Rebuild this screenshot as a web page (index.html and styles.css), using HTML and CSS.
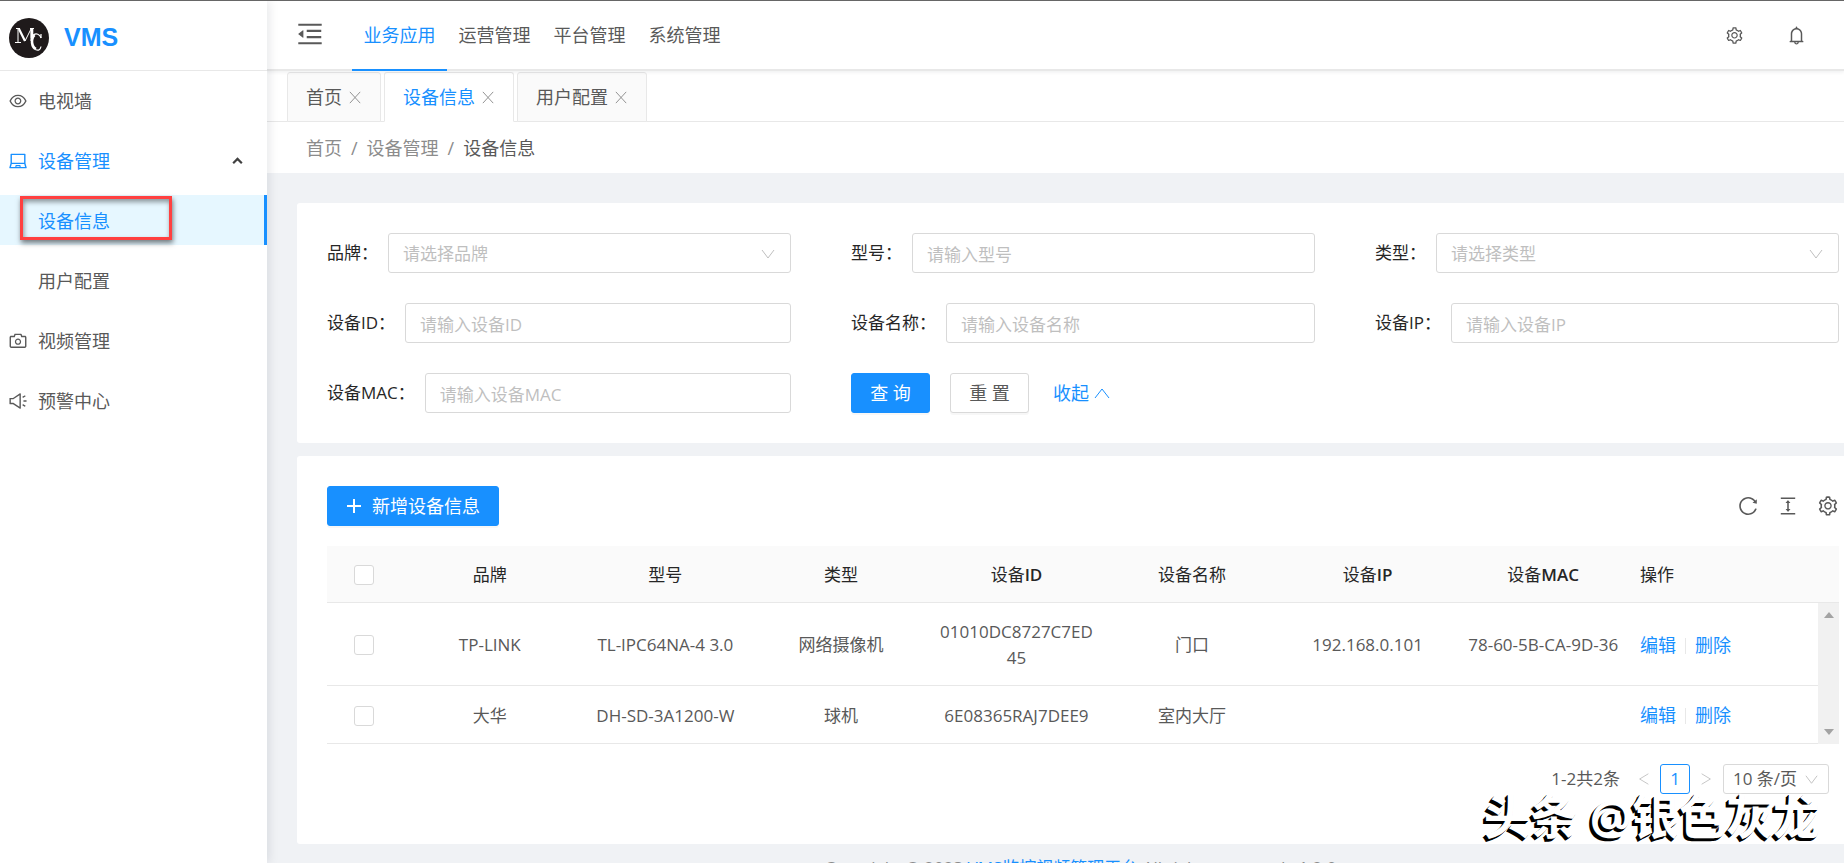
FILE: index.html
```html
<!DOCTYPE html>
<html lang="zh-CN">
<head>
<meta charset="utf-8">
<title>VMS</title>
<link rel="stylesheet" href="styles.css">
</head>
<body>
<svg class="sprite" aria-hidden="true">
  <symbol id="i-eye" viewBox="0 0 1024 1024"><path d="M942.2 486.2C847.4 286.5 704.1 186 512 186c-192.2 0-335.4 100.5-430.2 300.3a60.3 60.3 0 000 51.5C176.6 737.5 319.9 838 512 838c192.2 0 335.4-100.5 430.2-300.3 7.7-16.2 7.7-35 0-51.5zM512 766c-161.3 0-279.4-81.8-362.7-254C232.6 339.8 350.7 258 512 258c161.3 0 279.4 81.8 362.7 254C791.5 684.2 673.4 766 512 766zm-4-430c-97.2 0-176 78.8-176 176s78.8 176 176 176 176-78.8 176-176-78.8-176-176-176zm0 288c-61.9 0-112-50.1-112-112s50.1-112 112-112 112 50.1 112 112-50.1 112-112 112z"/></symbol>
  <symbol id="i-laptop" viewBox="0 0 1024 1024"><path d="M956.9 845.1L896.4 632V168c0-17.7-14.3-32-32-32h-704c-17.7 0-32 14.3-32 32v464L67.9 845.1C60.4 866 75.8 888 98 888h828.8c22.2 0 37.6-22 30.1-42.9zM200.4 208h624v395h-624V208zm228.3 608l8.1-37h150.3l8.1 37H428.7zm224 0l-19.1-86.7c-.8-3.7-4.1-6.3-7.8-6.3H398.2c-3.8 0-7 2.6-7.8 6.3L371.3 816H151l42.3-149h638.2l42.3 149H652.7z"/></symbol>
  <symbol id="i-camera" viewBox="0 0 1024 1024"><path d="M864 248H728l-32.4-90.8a32.07 32.07 0 00-30.2-21.2H358.6c-13.5 0-25.6 8.5-30.1 21.2L296 248H160c-44.2 0-80 35.8-80 80v456c0 44.2 35.8 80 80 80h704c44.2 0 80-35.8 80-80V328c0-44.2-35.8-80-80-80zm8 536c0 4.4-3.6 8-8 8H160c-4.4 0-8-3.6-8-8V328c0-4.4 3.6-8 8-8h186.7l17.1-47.8 22.9-64.2h250.5l22.9 64.2 17.1 47.8H864c4.4 0 8 3.6 8 8v456zM512 384c-88.4 0-160 71.6-160 160s71.6 160 160 160 160-71.6 160-160-71.6-160-160-160zm0 256c-53 0-96-43-96-96s43-96 96-96 96 43 96 96-43 96-96 96z"/></symbol>
  <symbol id="i-sound" viewBox="0 0 1024 1024"><path d="M625.9 115c-5.9 0-11.9 1.6-17.4 5.3L254 352H90c-8.8 0-16 7.2-16 16v288c0 8.8 7.2 16 16 16h164l354.5 231.7c5.5 3.6 11.6 5.3 17.4 5.3 16.7 0 32.1-13.3 32.1-32.1V147.1c0-18.8-15.4-32.1-32.1-32.1zM586 803L293.4 611.7l-18-11.7H146V424h129.4l17.9-11.7L586 221v582zm348-327H806c-8.8 0-16 7.2-16 16v40c0 8.8 7.2 16 16 16h128c8.8 0 16-7.2 16-16v-40c0-8.8-7.2-16-16-16zm-41.9 261.8l-110.3-63.7a15.9 15.9 0 00-21.7 5.9l-19.9 34.5c-4.4 7.6-1.8 17.4 5.8 21.8L856.3 800a15.9 15.9 0 0021.7-5.9l19.9-34.5c4.4-7.6 1.7-17.4-5.8-21.8zM760 344a15.9 15.9 0 0021.7 5.9L892 286.2c7.6-4.4 10.2-14.2 5.8-21.8L878 230a15.9 15.9 0 00-21.7-5.9L746 287.8a15.99 15.99 0 00-5.8 21.8L760 344z"/></symbol>
  <symbol id="i-fold" viewBox="0 0 1024 1024"><path d="M408 442h480c4.400 0 8-3.600 8-8v-56c0-4.400-3.600-8-8-8H408c-4.400 0-8 3.600-8 8v56c0 4.400 3.600 8 8 8zm-8 204c0 4.400 3.600 8 8 8h480c4.400 0 8-3.600 8-8v-56c0-4.400-3.600-8-8-8H408c-4.400 0-8 3.600-8 8v56zm504-486H120c-4.400 0-8 3.600-8 8v56c0 4.400 3.600 8 8 8h784c4.400 0 8-3.600 8-8v-56c0-4.400-3.600-8-8-8zm0 632H120c-4.400 0-8 3.600-8 8v56c0 4.400 3.600 8 8 8h784c4.400 0 8-3.600 8-8v-56c0-4.400-3.600-8-8-8zM115.400 518.900L271.700 642c5.800 4.600 14.400.5 14.400-6.900V388.900c0-7.400-8.500-11.500-14.400-6.900L115.400 505.100a8.740 8.740 0 000 13.800z"/></symbol>
  <symbol id="i-setting" viewBox="0 0 1024 1024"><path d="M924.8 625.7l-65.5-56c3.1-19 4.7-38.4 4.7-57.8s-1.6-38.8-4.7-57.8l65.5-56a32.03 32.03 0 009.3-35.2l-.9-2.6a443.74 443.74 0 00-79.7-137.9l-1.8-2.1a32.12 32.12 0 00-35.1-9.5l-81.3 28.9c-30-24.6-63.500-44-99.700-57.600l-15.700-85a32.050 32.050 0 00-25.800-25.700l-2.700-.5c-52.100-9.400-106.900-9.400-159 0l-2.700.5a32.050 32.050 0 00-25.800 25.700l-15.800 85.400a351.860 351.860 0 00-99 57.400l-81.900-29.100a32 32 0 00-35.100 9.500l-1.800 2.100a446.020 446.020 0 00-79.700 137.900l-.9 2.600c-4.500 12.500-.8 26.500 9.300 35.200l66.300 56.600c-3.100 18.800-4.600 38-4.600 57.100 0 19.200 1.500 38.400 4.600 57.100L99 625.500a32.030 32.030 0 00-9.300 35.200l.9 2.600c18.100 50.400 44.900 96.900 79.700 137.900l1.800 2.100a32.120 32.120 0 0035.100 9.500l81.900-29.100c29.800 24.500 63.100 43.900 99 57.400l15.800 85.400a32.050 32.050 0 0025.800 25.700l2.700.5a449.400 449.400 0 00159 0l2.700-.5a32.050 32.050 0 0025.800-25.700l15.700-85a350 350 0 0099.700-57.600l81.300 28.900a32 32 0 0035.100-9.500l1.800-2.100c34.800-41.100 61.600-87.500 79.700-137.900l.9-2.600c4.500-12.300.8-26.300-9.300-35zM788.300 465.900c2.500 15.100 3.800 30.600 3.800 46.100s-1.300 31-3.800 46.100l-6.600 40.100 74.700 63.900a370.030 370.030 0 01-42.600 73.600L721 702.800l-31.400 25.800c-23.900 19.600-50.500 35-79.300 45.800l-38.100 14.300-17.900 97a377.500 377.500 0 01-85 0l-17.900-97.200-37.800-14.500c-28.500-10.800-55-26.200-78.700-45.700l-31.400-25.900-93.400 33.200c-17-22.900-31.200-47.600-42.600-73.600l75.500-64.500-6.500-40c-2.400-14.900-3.700-30.300-3.700-45.500 0-15.300 1.200-30.600 3.700-45.500l6.500-40-75.500-64.500c11.300-26.100 25.600-50.700 42.600-73.600l93.400 33.200 31.400-25.900c23.700-19.500 50.200-34.900 78.700-45.700l37.900-14.300 17.900-97.200c28.100-3.200 56.800-3.200 85 0l17.900 97 38.100 14.300c28.700 10.800 55.400 26.200 79.300 45.800l31.400 25.800 92.800-32.900c17 22.900 31.200 47.600 42.600 73.600L781.800 426l6.500 39.900zM512 326c-97.200 0-176 78.800-176 176s78.800 176 176 176 176-78.800 176-176-78.800-176-176-176zm79.200 255.200A111.600 111.600 0 01512 614c-29.900 0-58-11.700-79.200-32.800A111.600 111.600 0 01400 502c0-29.900 11.700-58 32.800-79.200C454 401.600 482.100 390 512 390c29.900 0 58 11.600 79.200 32.800A111.600 111.600 0 01624 502c0 29.900-11.700 58-32.800 79.200z"/></symbol>
  <symbol id="i-bell" viewBox="0 0 1024 1024"><path d="M816 768h-24V428c0-141.1-104.3-257.7-240-277.1V112c0-22.1-17.9-40-40-40s-40 17.9-40 40v38.9c-135.7 19.4-240 136-240 277.1v340h-24c-17.7 0-32 14.3-32 32v32c0 4.4 3.6 8 8 8h216c0 61.8 50.2 112 112 112s112-50.2 112-112h216c4.4 0 8-3.6 8-8v-32c0-17.7-14.3-32-32-32zM512 888c-26.5 0-48-21.5-48-48h96c0 26.5-21.5 48-48 48zM304 768V428c0-55.6 21.6-107.8 60.9-147.1S456.400 220 512 220c55.600 0 107.800 21.600 147.100 60.900S720 372.400 720 428v340H304z"/></symbol>
  <symbol id="i-reload" viewBox="0 0 1024 1024"><path d="M909.1 209.3l-56.4 44.1C775.8 155.1 656.2 92 521.9 92 290 92 102.3 279.5 102 511.5 101.7 743.7 289.8 932 521.9 932c181.3 0 335.8-115 394.6-276.1 1.5-4.2-.7-8.9-4.9-10.3l-56.7-19.5a8 8 0 00-10.1 4.8c-1.8 5-3.8 10-5.9 14.9-17.3 41-42.1 77.8-73.7 109.4A344.77 344.77 0 01655.9 829c-42.3 17.9-87.4 27-133.8 27-46.5 0-91.5-9.1-133.8-27A341.5 341.5 0 01279 755.2a342.16 342.16 0 01-73.7-109.4c-17.9-42.4-27-87.4-27-133.9s9.1-91.5 27-133.9c17.3-41 42.1-77.8 73.7-109.4 31.6-31.6 68.4-56.4 109.3-73.8 42.3-17.9 87.4-27 133.8-27 46.500 0 91.500 9.100 133.800 27a341.500 341.500 0 01109.300 73.800c9.900 9.900 19.200 20.400 27.800 31.400l-60.200 47a8 8 0 003 14.100l175.600 43c5 1.200 9.900-2.600 9.900-7.700l.8-180.900c-.1-6.600-7.800-10.300-13-6.200z"/></symbol>
  <symbol id="i-height" viewBox="0 0 1024 1024"><path d="M840 836H184c-4.4 0-8 3.6-8 8v60c0 4.4 3.6 8 8 8h656c4.400 0 8-3.600 8-8v-60c0-4.400-3.600-8-8-8zm0-724H184c-4.400 0-8 3.600-8 8v60c0 4.400 3.600 8 8 8h656c4.400 0 8-3.600 8-8v-60c0-4.400-3.600-8-8-8zM610.800 378c6 0 9.400-7 5.700-11.700L515.700 238.700a7.140 7.140 0 00-11.300 0L403.600 366.300a7.230 7.230 0 005.700 11.700H476v268h-62.800c-6 0-9.400 7-5.700 11.700l100.800 127.500c2.900 3.700 8.500 3.700 11.300 0l100.800-127.500c3.700-4.700.4-11.700-5.700-11.700H548V378h62.800z"/></symbol>
  <symbol id="i-down" viewBox="0 0 16 16"><path class="line" d="M2 4l6 8 6-8"/></symbol>
  <symbol id="i-up" viewBox="0 0 16 16"><path class="line" d="M1 13l7-9 7 9"/></symbol>
  <symbol id="i-left" viewBox="0 0 16 16"><path class="line" d="M13 2L3 8l10 6"/></symbol>
  <symbol id="i-right" viewBox="0 0 16 16"><path class="line" d="M3 2l10 6-10 6"/></symbol>
  <symbol id="i-close" viewBox="0 0 16 16"><path class="line" d="M2 2l11 12M13 2L2 14"/></symbol>
  <symbol id="i-plus" viewBox="0 0 16 16"><path class="line thick" d="M8 1v14M1 8h14"/></symbol>
</svg>

<div class="app">
  <aside class="sider">
    <div class="brand">
      <svg class="brand-mark" viewBox="0 0 40 40" role="img" aria-label="MC">
        <circle cx="20" cy="20" r="20" fill="#1f1a1b"/>
        <g fill="none" stroke="#fff">
          <path stroke-width="1" d="M9 11v13M6 24.500h6M22 11v12M7 10.500h4M21 10.500h4"/>
          <path stroke-width="2.200" d="M10 11l6 12"/>
          <path stroke-width="1" d="M16 23l6-12"/>
          <path stroke-width="2.600" d="M23 11v9"/>
          <path stroke-width="1.200" d="M32 20c-1-4-5-5-7.500-3"/>
          <path stroke-width="2.600" d="M25.500 17c-4 4-3 12 1.500 14"/>
          <path stroke-width="1.200" d="M26.500 31.500c3 1.500 5 0 5.500-3M32 16v4"/>
        </g>
      </svg>
      <span class="brand-name">VMS</span>
    </div>
    <nav class="side-menu">
      <a class="side-item" href="#"><svg class="side-icon"><use href="#i-eye"/></svg>电视墙</a>
      <a class="side-item is-open" href="#"><svg class="side-icon"><use href="#i-laptop"/></svg>设备管理<svg class="side-arrow" viewBox="0 0 12 12"><path d="M2 8.500l4-4 4 4"/></svg></a>
      <a class="side-item is-sub is-active" href="#">设备信息<span class="marker"></span></a>
      <a class="side-item is-sub" href="#">用户配置</a>
      <a class="side-item" href="#"><svg class="side-icon"><use href="#i-camera"/></svg>视频管理</a>
      <a class="side-item" href="#"><svg class="side-icon"><use href="#i-sound"/></svg>预警中心</a>
    </nav>
  </aside>

  <div class="page">
    <header class="topbar">
      <button class="icon-btn fold" type="button" aria-label="收起菜单"><svg><use href="#i-fold"/></svg></button>
      <nav class="top-menu">
        <a class="top-item is-active" href="#">业务应用</a>
        <a class="top-item" href="#">运营管理</a>
        <a class="top-item" href="#">平台管理</a>
        <a class="top-item" href="#">系统管理</a>
      </nav>
      <div class="top-actions">
        <button class="icon-btn" type="button" aria-label="设置"><svg><use href="#i-setting"/></svg></button>
        <button class="icon-btn bell" type="button" aria-label="通知"><svg><use href="#i-bell"/></svg></button>
      </div>
    </header>

    <div class="tabs">
      <div class="tab"><a href="#">首页</a><button class="tab-close" type="button" aria-label="关闭"><svg><use href="#i-close"/></svg></button></div>
      <div class="tab is-active"><a href="#">设备信息</a><button class="tab-close" type="button" aria-label="关闭"><svg><use href="#i-close"/></svg></button></div>
      <div class="tab"><a href="#">用户配置</a><button class="tab-close" type="button" aria-label="关闭"><svg><use href="#i-close"/></svg></button></div>
    </div>

    <nav class="crumbs"><a href="#">首页</a><span>/</span><a href="#">设备管理</a><span>/</span><span class="crumb-now">设备信息</span></nav>

    <main class="content">
      <form class="card search">
        <div class="field"><label for="brand">品牌：</label><div class="select"><select id="brand"><option>请选择品牌</option></select><svg><use href="#i-down"/></svg></div></div>
        <div class="field"><label for="model">型号：</label><input id="model" type="text" placeholder="请输入型号"></div>
        <div class="field"><label for="kind">类型：</label><div class="select"><select id="kind"><option>请选择类型</option></select><svg><use href="#i-down"/></svg></div></div>
        <div class="field"><label for="devid">设备ID：</label><input id="devid" type="text" placeholder="请输入设备ID"></div>
        <div class="field"><label for="devname">设备名称：</label><input id="devname" type="text" placeholder="请输入设备名称"></div>
        <div class="field"><label for="devip">设备IP：</label><input id="devip" type="text" placeholder="请输入设备IP"></div>
        <div class="field"><label for="devmac">设备MAC：</label><input id="devmac" type="text" placeholder="请输入设备MAC"></div>
        <div class="actions">
          <button class="btn primary" type="button">查 询</button>
          <button class="btn" type="button">重 置</button>
          <a class="collapse" href="#">收起<svg><use href="#i-up"/></svg></a>
        </div>
      </form>

      <section class="card list">
        <div class="toolbar">
          <button class="btn primary add" type="button"><svg><use href="#i-plus"/></svg>新增设备信息</button>
          <div class="tools">
            <button class="icon-btn" type="button" aria-label="刷新"><svg><use href="#i-reload"/></svg></button>
            <button class="icon-btn" type="button" aria-label="密度"><svg><use href="#i-height"/></svg></button>
            <button class="icon-btn" type="button" aria-label="列设置"><svg><use href="#i-setting"/></svg></button>
          </div>
        </div>

        <div class="grid-head">
          <table>
            <colgroup><col class="c-check"><col span="7"><col class="c-ops"></colgroup>
            <thead><tr><th><input type="checkbox" aria-label="全选"></th><th>品牌</th><th>型号</th><th>类型</th><th>设备<b>ID</b></th><th>设备名称</th><th>设备<b>IP</b></th><th>设备<b>MAC</b></th><th class="ops">操作</th></tr></thead>
          </table>
        </div>
        <div class="grid-body">
          <table>
            <colgroup><col class="c-check"><col span="7"><col class="c-ops"></colgroup>
            <tbody>
              <tr><td><input type="checkbox" aria-label="选择 TP-LINK"></td><td>TP-LINK</td><td>TL-IPC64NA-4 3.0</td><td>网络摄像机</td><td class="code">01010DC8727C7ED45</td><td>门口</td><td>192.168.0.101</td><td>78-60-5B-CA-9D-36</td><td class="ops"><a href="#">编辑</a><i></i><a href="#">删除</a></td></tr>
              <tr><td><input type="checkbox" aria-label="选择 大华"></td><td>大华</td><td>DH-SD-3A1200-W</td><td>球机</td><td class="code">6E08365RAJ7DEE9</td><td>室内大厅</td><td></td><td></td><td class="ops"><a href="#">编辑</a><i></i><a href="#">删除</a></td></tr>
            </tbody>
          </table>
          <div class="scroller"><svg viewBox="0 0 10 6"><path d="M0 6l5-6 5 6z"/></svg><svg viewBox="0 0 10 6"><path d="M0 0l5 6 5-6z"/></svg></div>
        </div>

        <div class="pager">
          <span>1-2共2条</span>
          <button class="page-step" type="button" aria-label="上一页"><svg><use href="#i-left"/></svg></button>
          <button class="page-no" type="button">1</button>
          <button class="page-step" type="button" aria-label="下一页"><svg><use href="#i-right"/></svg></button>
          <div class="select page-size"><select aria-label="每页条数"><option>10 条/页</option></select><svg><use href="#i-down"/></svg></div>
        </div>
        <div class="watermark">头条 @银色灰龙</div>
      </section>
    </main>

    <footer class="footer">Copyright © 2023 <a href="#">VMS监控视频管理平台</a> All rights reserved v1.2.0</footer>
  </div>
</div>
</body>
</html>
```
FILE: styles.css
```css
* { box-sizing: border-box; }

body {
  margin: 0;
  height: 100vh;
  overflow: hidden;
  border-top: 1px solid #666;
  background: #f0f2f5;
  color: #595959;
  font: 17px/26px "Open Sans", "Noto Sans CJK SC", sans-serif;
}

a { color: #1890ff; text-decoration: none; }
button, input, select { font: inherit; color: inherit; }
button { cursor: pointer; }
svg { display: block; fill: currentColor; }
.sprite { position: absolute; width: 0; height: 0; }
.line { fill: none; stroke: currentColor; stroke-width: 1; }
.thick { stroke-width: 2; }

.app { display: flex; height: 100%; }

/* Sidebar */
.sider {
  position: relative;
  z-index: 2;
  flex: none;
  width: 267px;
  background: #fff;
  box-shadow: 2px 0 10px rgba(0, 21, 41, 0.1);
}
.brand {
  display: flex;
  align-items: center;
  gap: 15px;
  height: 70px;
  padding: 4px 9px 0;
  border-bottom: 1px solid #e8e8e8;
}
.brand-mark { width: 40px; height: 40px; }
.brand-name { padding-bottom: 2px; color: #1890ff; font: bold 25px/38px "Liberation Sans", sans-serif; }
.side-menu { display: flex; flex-direction: column; gap: 10px; padding-top: 4px; font-size: 18px; }
.side-item {
  position: relative;
  display: flex;
  align-items: center;
  height: 50px;
  padding: 1px 23px 0 8px;
  color: #595959;
}
.side-icon { width: 20px; height: 20px; margin-right: 10px; }
.side-arrow { width: 13px; height: 13px; margin-left: auto; fill: none; stroke: #404040; stroke-width: 2; }
.side-item.is-open { color: #1890ff; }
.side-item.is-sub { padding-left: 38px; }
.side-item.is-active { color: #1890ff; background: #e6f7ff; border-right: 3px solid #1890ff; }
.marker {
  position: absolute;
  inset: 1px auto 5px 20px;
  width: 152px;
  border: 3px solid #ff4040;
  box-shadow: 1px 3px 5px rgba(0, 0, 0, 0.5), inset 1px 3px 5px rgba(0, 0, 0, 0.4);
}

/* Page header */
.page { display: flex; flex: 1; flex-direction: column; min-width: 0; }
.topbar {
  position: relative;
  z-index: 1;
  display: flex;
  flex: none;
  height: 70px;
  padding: 0 37px 0 28px;
  background: #fff;
  border-bottom: 2px solid #e8e8e8;
  box-shadow: 0 1px 4px rgba(0, 21, 41, 0.08);
}
.icon-btn { display: grid; place-items: center; padding: 0; border: 0; background: none; color: #595959; }
.icon-btn svg { width: 22px; height: 22px; }
.fold { width: 30px; margin-right: 27px; padding-bottom: 2px; }
.fold svg { width: 30px; height: 30px; }
.top-menu { display: flex; margin-bottom: -2px; font-size: 18px; }
.top-item { width: 95px; padding-top: 21px; color: #595959; text-align: center; border-bottom: 2px solid transparent; }
.top-item.is-active { color: #1890ff; border-color: #1890ff; }
.top-actions { display: flex; gap: 42px; margin-left: auto; }
.top-actions svg { width: 19px; height: 19px; }
.top-actions .bell svg { width: 21px; height: 21px; }

.tabs {
  display: flex;
  flex: none;
  gap: 3px;
  height: 51px;
  padding: 1px 20px 0;
  background: #fff;
  border-bottom: 1px solid #e8e8e8;
  font-size: 18px;
}
.tab {
  display: flex;
  align-items: center;
  gap: 6px;
  height: 50px;
  padding: 0 17px 0 18px;
  background: #fafafa;
  border: 1px solid #e8e8e8;
  border-radius: 3px 3px 0 0;
}
.tab a { color: #595959; }
.tab.is-active { background: #fff; border-bottom-color: #fff; }
.tab.is-active a { color: #1890ff; }
.tab-close { padding: 0; border: 0; background: none; color: #8c8c8c; }
.tab-close svg { width: 15px; height: 15px; }

.crumbs {
  display: flex;
  flex: none;
  align-items: center;
  gap: 9px;
  height: 51px;
  padding: 1px 39px 0;
  background: #fff;
  color: #8c8c8c;
  font-size: 18px;
}
.crumbs a { color: #8c8c8c; }
.crumbs .crumb-now { color: #595959; }

/* Cards */
.content { display: flex; flex-direction: column; gap: 13px; padding: 30px 0 0 30px; }
.card { padding: 30px 5px 30px 30px; background: #fff; border-radius: 3px 0 0 3px; }

.search { display: grid; grid-template-columns: repeat(3, 1fr); gap: 30px 60px; }
.field { display: flex; align-items: center; color: #262626; }
.field label { flex: none; margin-right: 10px; }
.field input, .select select {
  width: 100%;
  min-width: 0;
  height: 40px;
  padding: 2px 14px 0;
  border: 1px solid #d9d9d9;
  border-radius: 3px;
  background: #fff;
}
.field input { flex: 1; }
.field input::placeholder { color: #bfbfbf; opacity: 1; }
.select { position: relative; flex: 1; }
.select select { appearance: none; color: #bfbfbf; }
.select svg { position: absolute; top: 13px; right: 15px; width: 16px; height: 16px; color: #bfbfbf; pointer-events: none; }

.actions { display: flex; align-items: center; gap: 20px; }
.btn {
  height: 40px;
  min-width: 79px;
  padding: 0 17px;
  border: 1px solid #d9d9d9;
  border-radius: 3px;
  background: #fff;
  box-shadow: 0 2px 0 rgba(0, 0, 0, 0.03);
  font-size: 18px;
}
.btn.primary { color: #fff; background: #1890ff; border-color: #1890ff; }
.collapse { display: flex; align-items: center; gap: 5px; margin-left: 4px; font-size: 18px; }
.collapse svg { width: 16px; height: 16px; }

.toolbar { display: flex; align-items: center; justify-content: space-between; margin-bottom: 20px; }
.add { display: flex; align-items: center; gap: 10px; padding: 0 18px; }
.add svg { width: 16px; height: 16px; }
.tools { display: flex; gap: 18px; }

/* Device table */
.grid-head { padding-right: 21px; background: #fafafa; border-bottom: 1px solid #e8e8e8; }
.grid-body { display: flex; }
table { width: 100%; table-layout: fixed; border-collapse: collapse; }
.c-check { width: 75px; }
.c-ops { width: 187px; }
th { height: 56px; padding: 1px 5px 0; color: #262626; font-weight: 400; }
th b { font-weight: 600; }
td { height: 58px; padding: 16px 5px 14px; border-bottom: 1px solid #e8e8e8; text-align: center; }
td.code { padding-right: 10px; padding-left: 10px; word-break: break-all; }
.ops { padding-left: 9px; text-align: left; }
.ops a { font-size: 18px; }
.ops i { display: inline-block; width: 1px; height: 16px; margin: 0 9px; background: #e8e8e8; vertical-align: -2px; }
input[type="checkbox"] {
  display: block;
  width: 20px;
  height: 20px;
  margin: 0 0 0 22px;
  appearance: none;
  border: 1px solid #d9d9d9;
  border-radius: 3px;
  background: #fff;
}
.scroller {
  display: flex;
  flex: none;
  flex-direction: column;
  align-items: center;
  justify-content: space-between;
  width: 21px;
  padding: 9px 0;
  background: #f1f1f1;
  color: #a3a3a3;
}
.scroller svg { width: 10px; height: 6px; }

.pager { display: flex; align-items: center; justify-content: flex-end; margin: 20px 10px 20px 0; }
.page-step { display: grid; place-items: center; width: 32px; padding: 0; border: 0; background: none; color: #bfbfbf; }
.page-step svg { width: 14px; height: 14px; }
.page-no { width: 30px; height: 30px; padding: 0; border: 1px solid #1890ff; border-radius: 3px; background: #fff; color: #1890ff; line-height: 26px; }
.pager > span { margin-right: 8px; }
.page-size { flex: none; width: 106px; margin-left: 1px; }
.page-size select { height: 30px; padding: 0 9px; color: #595959; }
.page-size svg { top: 8px; right: 10px; width: 15px; height: 15px; }

.list { position: relative; }
.watermark {
  position: absolute;
  right: 24px;
  bottom: 0;
  color: #fff;
  font-size: 47px;
  font-weight: 700;
  line-height: 56px;
  text-shadow: -1px 1px 0 #000, -2px 2px 0 #000, -3px 3px 0 #000;
  pointer-events: none;
}

.footer { padding: 11px 0 0 50px; color: #8c8c8c; text-align: center; white-space: nowrap; }
```
